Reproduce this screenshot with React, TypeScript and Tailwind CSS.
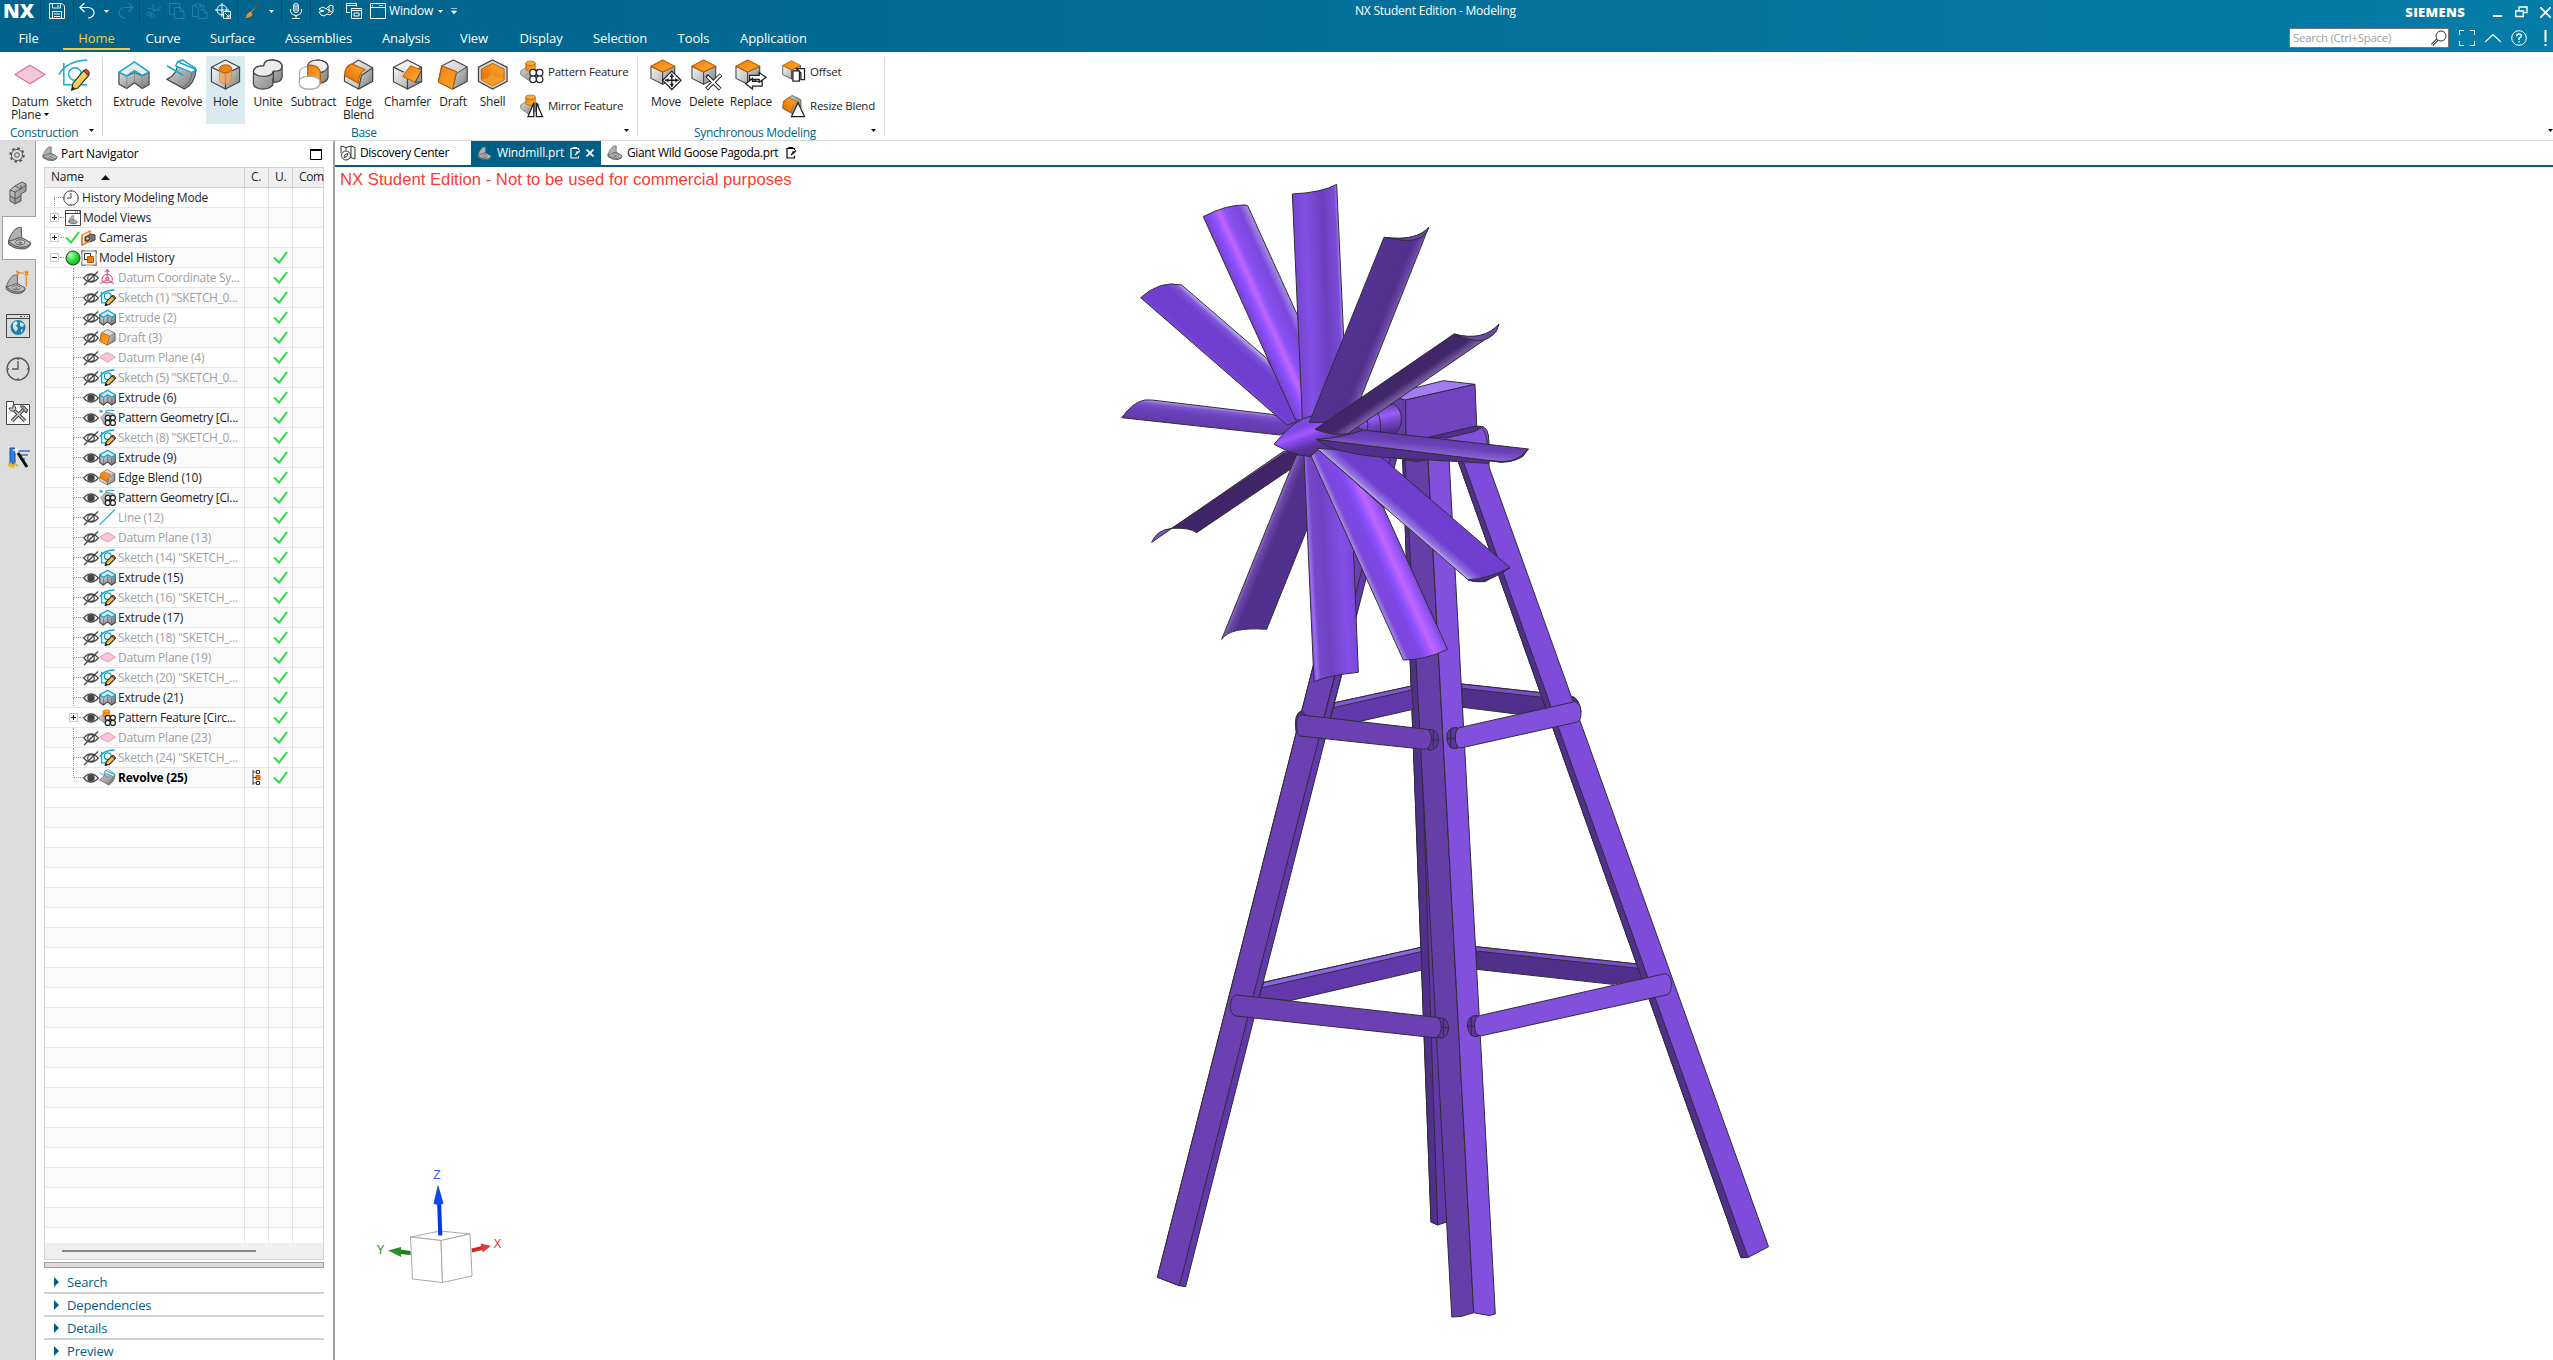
import React from "react";

type Kids = { children?: React.ReactNode };

/* ---------- generic pieces ---------- */

const Svg = ({ s = 16, w, h, box, children, cls = "" }: { s?: number; w?: number; h?: number; box?: string; cls?: string } & Kids) => (
  <svg width={w ?? s} height={h ?? s} viewBox={box ?? `0 0 ${w ?? s} ${h ?? s}`} fill="none" className={`shrink-0 ${cls}`}>
    {children}
  </svg>
);

const Caret = ({ cls = "text-white" }: { cls?: string }) => (
  <Svg w={5} h={3} cls={cls}><path d="M0 0h5L2.5 3z" fill="currentColor" /></Svg>
);

const Defs = () => (
  <svg width="0" height="0" className="absolute">
    <defs>
      <linearGradient id="gl" x1="0" y1="0" x2="1" y2="1"><stop offset="0" stopColor="#f4f4f4" /><stop offset="1" stopColor="#b4b4b4" /></linearGradient>
      <linearGradient id="gd" x1="0" y1="0" x2="1" y2="1"><stop offset="0" stopColor="#d8d8d8" /><stop offset="1" stopColor="#7c7c7c" /></linearGradient>
      <linearGradient id="or" x1="0" y1="0" x2="1" y2="1"><stop offset="0" stopColor="#ee7d10" /><stop offset="1" stopColor="#ffac2e" /></linearGradient>
      <linearGradient id="orl" x1="1" y1="0" x2="0" y2="1"><stop offset="0" stopColor="#ffab30" /><stop offset="1" stopColor="#e06800" /></linearGradient>
      <radialGradient id="gb" cx=".35" cy=".3" r=".8"><stop offset="0" stopColor="#b8ffb8" /><stop offset=".5" stopColor="#2be03a" /><stop offset="1" stopColor="#0aa51c" /></radialGradient>
    </defs>
  </svg>
);

/* ---------- 32 unit feature drawings ---------- */

const K = "#444";
const DatumPlaneArt = () => <path d="M1 16L16.500 6.500L32 16L16.500 25.500z" fill="#f6c6da" stroke="#dd6d98" strokeWidth="1.200" />;
const PencilArt = () => (
  <g>
    <path d="M14 32L15.500 25L26.500 12L32 16.500L20.500 30z" fill="#f8cf52" stroke="#333" strokeWidth="1.200" />
    <path d="M26.500 12l2-1.500q3.500 1 4 4.500l-1.500 2z" fill="#e0393e" stroke="#333" />
    <path d="M14 32l.9-4 2.800 2.500z" fill="#222" />
  </g>
);
const SketchArt = () => (
  <g>
    <path d="M1 16Q9 2 30 1M6 4V26.500H30" stroke="#17a9cf" strokeWidth="1.500" />
    <circle cx="17.500" cy="15.500" r="6.500" stroke="#17a9cf" strokeWidth="1.500" />
    <PencilArt />
  </g>
);
const ExtrudeArt = () => (
  <g>
    <path d="M1 14v12l8 4.500 8-6 8 6 7-4V14L25 17.500 17 14l-8 3.500z" fill="url(#gd)" stroke={K} strokeWidth="1.200" />
    <path d="M9 18v12.500M25 18v12.500M17 14v10.500" stroke="#888" />
    <path d="M1 13.500L17 3L32 13.500L25 17L17 12L9 17.500z" fill="#ececec" stroke="#17a9cf" strokeWidth="1.600" />
  </g>
);
const RevolveArt = () => (
  <g>
    <path d="M12 3L31 11Q30 25 19 31L1 21Q12 16 12 3z" fill="url(#gd)" stroke={K} strokeWidth="1.200" />
    <path d="M12 3L31 11L27 14L10 7z" fill="#fff" stroke="#17a9cf" strokeWidth="1.400" />
    <path d="M27 14Q26 24 17 29" stroke="#666" />
    <path d="M1 7L18 17M12 3L17 1L31 10" stroke="#17a9cf" strokeWidth="1.600" />
  </g>
);
/* bolder drawings used at row size */
const SketchRowArt = () => (
  <g>
    <path d="M1 15Q10 2 30 2M5 6V27H15" stroke="#12a5cc" strokeWidth="2.600" />
    <circle cx="17" cy="14" r="6.500" stroke="#12a5cc" strokeWidth="2.600" />
    <path d="M12 32L14 25L26 13L32 18L20 30z" fill="#f8c440" stroke="#222" strokeWidth="2" />
    <path d="M25 14l3-2 4 4.500-2 2.500z" fill="#d84a3a" stroke="#222" strokeWidth="1.500" />
    <path d="M12 32l1.500-5 4 3.500z" fill="#111" />
  </g>
);
const ExtrudeRowArt = () => (
  <g>
    <path d="M1.500 12v14l7 5 8-6 8 6 7-5V12z" fill="url(#gd)" stroke={K} strokeWidth="2.200" />
    <path d="M9 18v12M25 18v12M17 14v10" stroke="#666" strokeWidth="1.500" />
    <path d="M1 11.500L17 2.500L32 11.500L25 16L17 11L9 16z" fill="#d8eef4" stroke="#12a5cc" strokeWidth="2.600" />
  </g>
);
const CubeArt = ({ top = "#efefef", left = "url(#gl)", right = "url(#gd)" }) => (
  <g stroke={K} strokeWidth="1.200" strokeLinejoin="round">
    <path d="M16 1L30.500 8.500L16 15.500L1.500 8.500z" fill={top} />
    <path d="M1.500 8.500L16 15.500V31L1.500 23.500z" fill={left} />
    <path d="M30.500 8.500L16 15.500V31L30.500 23.500z" fill={right} />
  </g>
);
const HoleArt = () => (
  <g>
    <CubeArt />
    <path d="M10 10v13q6 5 12 0V10z" fill="#f1a35a" opacity=".75" />
    <path d="M10 10v13q6 5 12 0V10" stroke="#e98a2e" />
    <ellipse cx="16" cy="10" rx="6.500" ry="4" fill="#f08314" stroke="#b75e06" />
  </g>
);
const UniteArt = () => (
  <g stroke={K} strokeWidth="1.300">
    <path d="M12 7Q13 1 21 1Q31 2 31 8V19Q30 24 23 24L21.500 22V27Q18 31 11.500 31Q3 31 1.500 26V13Q2 7 12 7z" fill="url(#gd)" />
    <path d="M12 7Q13 1 21 1Q31 2 31 8Q30 13 22 12.500Q21 18 11 18Q2 17 1.500 13Q2 7 12 7z" fill="#ececec" />
    <path d="M22 13V24" />
  </g>
);
const SubtractArt = () => (
  <g strokeWidth="1.200">
    <path d="M10 8Q11 1 21 1Q31 2 31 8V19Q30 24 23 25V14z" fill="url(#gd)" stroke={K} />
    <path d="M10 7Q22 8 23 14Q29 13 31 8Q30 2 21 1Q11 1 10 7z" fill="#ececec" stroke={K} />
    <path d="M1.500 13V26Q3 31 12 31Q21 31 22.500 26V13Q20 8 12 7.500Q3 8 1.500 13z" fill="#fff" stroke="#aaa" />
    <path d="M10 6.500Q20 5 23 13V26Q20 19 10 17z" fill="url(#or)" stroke="#b75e06" />
    <path d="M1.500 22Q3 18 12 18Q20 18 22.500 22V26Q20 31 12 31Q3 31 1.500 26z" fill="#fff" stroke="#aaa" />
  </g>
);
const EdgeBlendArt = () => (
  <g stroke={K} strokeWidth="1.200" strokeLinejoin="round">
    <path d="M16 1L30.500 9V23L16 31L1.500 23V17L11 4z" fill="url(#gl)" />
    <path d="M19 17L30.500 9V23L16 31z" fill="url(#gd)" />
    <path d="M1.500 17Q2 7 9 5L23 11Q16 14 16 25z" fill="url(#orl)" stroke="#b75e06" />
  </g>
);
const ChamferArt = () => (
  <g>
    <CubeArt />
    <path d="M20 6L30.500 12L27 24L9 17z" fill="#ddd" />
    <path d="M19 7L30.500 11.500L24 24L11 18z" fill="url(#or)" stroke="#b75e06" />
    <path d="M30.500 11.500V23.500L24 24z" fill="#999" stroke={K} />
  </g>
);
const DraftArt = () => (
  <g>
    <path d="M17 1L31 8V23L16 31L1.500 23L5 7z" fill="url(#gl)" stroke={K} strokeWidth="1.200" />
    <path d="M20 15L31 8V23L16 31z" fill="url(#gd)" stroke={K} />
    <path d="M5 7L20 13L16 31L1.500 24z" fill="url(#or)" stroke="#b75e06" strokeWidth="1.200" />
  </g>
);
const ShellArt = () => (
  <g>
    <path d="M16 1L31 8.500V23L16 31L1.500 23V8.500z" fill="#d4d4d4" stroke={K} strokeWidth="1.300" />
    <path d="M16 4.500L28 10.500V21.500L16 28L4.500 21.500V10.500z" fill="url(#orl)" stroke="#b75e06" />
    <path d="M16 4.500Q19 18 4.500 21.500L16 28L28 21.500L16 17" fill="#f9a52d" opacity=".7" />
  </g>
);
const BossArt = () => (
  <g>
    <path d="M1 15L9 10L26 14V22L12 28L1 20z" fill="url(#gd)" stroke="#666" />
    <path d="M8 4V14q6 4 13 0V4z" fill="url(#or)" stroke="#b75e06" />
    <ellipse cx="14.500" cy="4.500" rx="6.500" ry="3" fill="#fba83a" stroke="#b75e06" />
  </g>
);
const RingsArt = () => (
  <g fill="#fff" stroke="#222" strokeWidth="1.700">
    <circle cx="18" cy="17.500" r="4.500" /><circle cx="27" cy="17.500" r="4.500" /><circle cx="18" cy="26.500" r="4.500" /><circle cx="27" cy="26.500" r="4.500" />
  </g>
);
const PatternArt = () => <g><BossArt /><RingsArt /></g>;
const MirrorArt = () => (
  <g>
    <BossArt />
    <path d="M19 12V31H11zM22.500 12V31H31z" fill="#fff" stroke="#222" strokeWidth="1.800" />
  </g>
);
const RowRings = () => (
  <g fill="#fff" stroke="#222" strokeWidth="2.400">
    <circle cx="17" cy="17" r="4.800" /><circle cx="27" cy="17" r="4.800" /><circle cx="17" cy="27" r="4.800" /><circle cx="27" cy="27" r="4.800" />
  </g>
);
const PatternRowArt = () => <g><BossArt /><RowRings /></g>;
const PatternGeomArt = () => (
  <g>
    <path d="M4 16L14 6L30 10V24L10 30z" fill="url(#gd)" stroke="#777" strokeWidth="1.500" />
    <path d="M4 1v7M0 4.500h8M12 5q8-4 18-2" stroke="#12a5cc" strokeWidth="2" />
    <RowRings />
  </g>
);
const SyncCube = ({ children }: Kids) => (
  <g>
    <g stroke={K} strokeWidth="1.100" strokeLinejoin="round">
      <path d="M1 7.500L13 13.500V26L1 20z" fill="url(#gl)" />
      <path d="M25.500 7.500L13 13.500V26L25.500 20z" fill="url(#gd)" />
      <path d="M13 1L25.500 7.500L13 13.500L1 7.500z" fill="url(#or)" stroke="#b75e06" />
    </g>
    {children}
  </g>
);
const MoveArt = () => (
  <SyncCube>
    <path d="M22.500 12.500L32 22L22.500 31.500L13 22z" fill="#fff" stroke="#222" strokeWidth="1.300" />
    <path d="M22.500 15v14M15.500 22h14" stroke="#222" strokeWidth="1.500" />
    <path d="M20 18.500l2.500-3 2.500 3zM20 25.500l2.500 3 2.500-3zM19 19.500l-3 2.500 3 2.500zM26 19.500l3 2.500-3 2.500z" fill="#222" />
  </SyncCube>
);
const DeleteArt = () => (
  <SyncCube>
    <path d="M16 17L30 31M31 16L16 31" stroke="#222" strokeWidth="4" />
    <path d="M17 18L29.500 30.500M30.500 16.500L16.500 30.500" stroke="#fff" strokeWidth="2" />
  </SyncCube>
);
const ReplaceArt = () => (
  <SyncCube>
    <path d="M15 17h10v-3l7 5-7 5v-3H15zM28 23H18v-3l-7 5.500 7 5.500v-3H28z" fill="#fff" stroke="#222" strokeWidth="1.300" />
  </SyncCube>
);
const OffsetArt = () => (
  <SyncCube>
    <path d="M15 15h9v14h-9zM20 12h11v15h-5V18z" fill="#fff" stroke="#222" strokeWidth="1.700" />
  </SyncCube>
);
const ResizeArt = () => (
  <g>
    <path d="M14 2L26 8V20L14 27L1 20L2 10z" fill="url(#gd)" stroke={K} />
    <path d="M1 19Q2 7 9 5L22 11Q14 14 13 26z" fill="url(#orl)" stroke="#b75e06" />
    <path d="M22 12L31 31H13z" fill="#fff" stroke="#222" strokeWidth="1.700" />
  </g>
);
const CsysArt = () => (
  <g stroke="#d9467e" strokeWidth="2">
    <path d="M16 3V20L3 29M16 20L29 29" /><path d="M12 6l4-5 4 5M16 10a10 10 0 0 1 9 14M16 10a10 10 0 0 0-9 14M7 24q9 6 18 0" /><circle cx="16" cy="19" r="3" fill="#f6c6da" />
  </g>
);
const LineArt = () => <path d="M1 31L31 1" stroke="#17a9cf" strokeWidth="2.200" />;

const BracketArt = () => (
  <g stroke="#555" strokeWidth="1.300" strokeLinejoin="round">
    <path d="M2 19Q5 10 11 4Q15 1 19 2V16Q12 18 8 24L2 22z" fill="#b0b0b0" />
    <path d="M8 20Q14 14 20 16L31 22Q32 27 24 30Q12 32 2 24V20z" fill="#8c8c8c" />
    <path d="M2 20Q6 19 10 18Q16 14 21 16L31 22Q30 27 20 28Q10 28 2 20z" fill="#bdbdbd" />
    <ellipse cx="17.500" cy="21.500" rx="6" ry="3.200" fill="#d6d6d6" /><ellipse cx="17.500" cy="22" rx="3" ry="1.500" fill="#777" stroke="none" />
  </g>
);

const Art = ({ a, s }: { a: React.ReactNode; s: number }) => <Svg s={s} box="0 0 33 33">{a}</Svg>;

/* ---------- header ---------- */

const Sep = () => <div className="h-[22px] w-px shrink-0 bg-[#004f72]" />;
const Slot = ({ w, children }: { w: string } & Kids) => <div className={`flex shrink-0 items-center justify-center ${w}`}>{children}</div>;

const QuickBar = () => (
  <div className="flex h-[22px] w-[1355px] shrink-0 items-center">
    <span className="w-[40px] shrink-0 pl-[3px] text-[20px] leading-[22px] font-extrabold whitespace-nowrap text-white">NX</span>
    <Sep />
    <Slot w="w-[32px]">
      <Svg><path d="M.5.500h12.500l2.500 2.500V15.500H.5zM3.500.500v4.500h8V.500M3.500 15.500v-7h9v7M5 11h6M5 13.500h6M9 2v2" stroke="#fff" /></Svg>
    </Slot>
    <Sep />
    <Slot w="w-[26px]"><Svg><path d="M5.500 0L.8 4.500 5.500 9M1 4.500h8a6 5.200 0 0 1 0 10.500" stroke="#fff" strokeWidth="1.200" /></Svg></Slot>
    <Slot w="w-[12px]"><Caret /></Slot>
    <Slot w="w-[27px]"><Svg><path d="M10.500 0l4.700 4.500L10.500 9M15 4.500H7a6 5.200 0 0 0 0 10.500" stroke="#1d81a8" strokeWidth="1.200" /></Svg></Slot>
    <Sep />
    <Slot w="w-[27px]"><Svg><path d="M7 1l1 8M1 5l14 3M7 9l-3 1.500M8 8l7-4" stroke="#1d81a8" /><circle cx="3" cy="11" r="2" stroke="#1d81a8" /><circle cx="7" cy="13" r="2" stroke="#1d81a8" /></Svg></Slot>
    <Slot w="w-[19px]"><Svg><path d="M5 11.500H.5V.500h10v4M5.500 4.500h6l3.500 3.500v7.500H5.500zM11 5v3.500h4" stroke="#1d81a8" /></Svg></Slot>
    <Slot w="w-[27px]"><Svg><path d="M5.500 13.500H.5v-11h3M9 2.500h3v3M3.500 1h5.500v3H3.500zM6.500 6.500h5.500l3 3v6H6.500zM12 7v3h3" stroke="#1d81a8" /></Svg></Slot>
    <Slot w="w-[19px]"><Svg><path d="M7 0v4M7 9v5M0 7h4M9.500 7h4.500M7 4v5M4 7h5" stroke="#fff" /><circle cx="7" cy="7" r="5" stroke="#fff" /><path d="M8.500 8.500h7v7h-7z" fill="#00648c" stroke="#fff" /><path d="M10 10l4 4M14 11.500V14h-2.500" stroke="#fff" /></Svg></Slot>
    <Slot w="w-[5px]" />
    <Sep />
    <Slot w="w-[27px]"><Svg><path d="M15 0.500L6.500 9l1 1z" fill="#e8dcc8" stroke="#6b4a30" /><path d="M0 15q3-1 3-4l3-2.500 2.500 2.500Q8 15 0 15z" fill="#e8912c" /></Svg></Slot>
    <Slot w="w-[12px]"><Caret /></Slot>
    <Slot w="w-[4px]" />
    <Sep />
    <Slot w="w-[28px]"><Svg><rect x="5.500" y=".5" width="5" height="9" rx="2.500" stroke="#fff" /><path d="M6 3h4M6 5h4M6 7h4M2.500 6v2.500q1 4 5.500 4t5.500-4V6M8 12.500v3M4 15.500h8" stroke="#fff" /></Svg></Slot>
    <Sep />
    <Slot w="w-[30px]"><Svg><path d="M1 6l4-2 3 2 4-4 3 1v6l-3 3-3-1-3 2-3-1-2-3 5-1-4-1z" stroke="#fff" /><path d="M8 6l3 1v3M11 3v4l3 2" stroke="#fff" /></Svg></Slot>
    <Sep />
    <Slot w="w-[24px]"><Svg><path d="M4 9.500H.5V.500h10v3M.5 2.500h10M5.500 5.500h10v10h-10zM5.500 7.500h10M8 10h5v3H8z" stroke="#fff" /></Svg></Slot>
    <Slot w="w-[23px]"><Svg><path d="M.5.500h15v15H.5zM.5 4.500h15M2 2.500h1M9 2.500h4" stroke="#fff" /></Svg></Slot>
    <span className="w-[45px] text-[12px] tracking-[-0.2px] text-white">Window</span>
    <Slot w="w-[13px]"><Caret /></Slot>
    <Slot w="w-[13px]"><Svg w={6} h={6}><path d="M0 .5h6M.5 3h5L3 6z" fill="#fff" stroke="#fff" strokeWidth=".6" /></Svg></Slot>
  </div>
);

const menu: [string, string][] = [
  ["File", "w-[57px] mr-[6px]"], ["Home", "w-[67px]"], ["Curve", "w-[66px]"], ["Surface", "w-[73px]"], ["Assemblies", "w-[99px]"],
  ["Analysis", "w-[76px]"], ["View", "w-[60px]"], ["Display", "w-[74px]"], ["Selection", "w-[84px]"], ["Tools", "w-[63px]"], ["Application", "w-[97px]"],
];

const Header = () => (
  <div className="h-[52px] bg-linear-to-r from-[#00628a] to-[#067ca8]">
    <div className="flex h-[24px] items-start">
      <QuickBar />
      <span className="text-[12px] leading-[22px] tracking-[-0.22px] whitespace-nowrap text-white">NX Student Edition - Modeling</span>
      <div className="ml-auto flex h-[24px] items-center">
        <span className="mr-[28px] pt-[1px] text-[13px] leading-none font-extrabold tracking-[0.35px] text-white">SIEMENS</span>
        <Svg w={9} h={12} cls="mr-[13px]"><path d="M0 10h9" stroke="#fff" strokeWidth="2" /></Svg>
        <Svg w={13} h={12} cls="mr-[12px]"><path d="M.7 5h7.600v5.500H.7zM4 5V1h8v5.500H8.500" stroke="#fff" strokeWidth="1.400" /></Svg>
        <Svg w={11} h={11} cls="mr-[2px]"><path d="M0 0L11 11M11 0L0 11" stroke="#fff" strokeWidth="1.800" /></Svg>
      </div>
    </div>
    <div className="flex h-[28px]">
      {menu.map(([t, c]) => (
        <div key={t} className={`flex h-[26px] justify-center border-b-2 text-[13px] leading-[28px] tracking-[-0.1px] ${c} ${t === "Home" ? "border-[#fcc640] text-[#fcc640]" : "border-transparent text-white"}`}>{t}</div>
      ))}
      <div className="mt-[4px] ml-auto flex h-[20px] items-center">
        <div className="flex h-[20px] w-[160px] items-center justify-between border border-[#777] bg-white pr-[1px] pl-[3px]">
          <span className="text-[11.500px] tracking-[-0.28px] text-[#a0a0a0]">Search (Ctrl+Space)</span>
          <Svg><circle cx="10" cy="6" r="5" stroke="#333" /><path d="M6.500 9.500L1 15" stroke="#333" strokeWidth="3" /><path d="M6.500 9.500L1 15" stroke="#fff" strokeWidth="1" /></Svg>
        </div>
        <Svg cls="ml-[10px]"><path d="M.5 5V.500H5M11 .5h4.500V5M15.500 11v4.500H11M5 15.500H.5V11" stroke="#fff" /></Svg>
        <Svg cls="ml-[10px]"><path d="M0 12L8 4.500L16 12" stroke="#fff" strokeWidth="1.200" /></Svg>
        <Svg cls="ml-[10px]"><circle cx="8" cy="8" r="7.300" stroke="#fff" /><path d="M5.700 6.300q0-2.300 2.300-2.300t2.300 2q0 1.300-2.300 2.200V10M8 11v1.500" stroke="#fff" strokeWidth="1.300" /></Svg>
        <Svg w={3} cls="mr-[6px] ml-[17px]" h={16}><path d="M1.500 0v12M1.500 14v2" stroke="#fff" strokeWidth="2" /></Svg>
      </div>
    </div>
  </div>
);

/* ---------- ribbon ---------- */

const Tool = ({ art, label, w, on }: { art: React.ReactNode; label: React.ReactNode; w: string; on?: boolean }) => (
  <div className={`mt-[4px] flex h-[68px] shrink-0 flex-col items-center pt-[3px] ${w} ${on ? "bg-[#daebf0]" : ""}`}>
    <Art a={art} s={32} />
    <div className="mt-[4px] text-center text-[12px] leading-[13px] tracking-[-0.2px] whitespace-nowrap text-[#1e1e1e]">{label}</div>
  </div>
);
const SmallTool = ({ art, label }: { art: React.ReactNode; label: string }) => (
  <div className="flex h-[34px] items-center gap-[4px]">
    <Art a={art} s={24} />
    <span className="text-[11.500px] tracking-[-0.22px] whitespace-nowrap text-[#1e1e1e]">{label}</span>
  </div>
);
const Group = ({ w, title, titlePad, children }: { w: string; title: string; titlePad: string } & Kids) => (
  <div className={`flex shrink-0 flex-col ${w}`}>
    <div className="flex h-[73px]">{children}</div>
    <div className="flex h-[15px] items-center justify-between pr-[8px]">
      <span className={`text-[12px] leading-[15px] tracking-[-0.3px] text-[#006487] ${titlePad}`}>{title}</span>
      <Svg w={5} h={3} cls="mb-[5px]"><path d="M0 0h5L2.500 3z" fill="#111" /></Svg>
    </div>
  </div>
);
const GroupLine = () => <div className="mt-[5px] h-[79px] w-px shrink-0 bg-[#d8d8d8]" />;

const Ribbon = () => (
  <div className="flex h-[89px] border-b border-[#d8d8d8] bg-white">
    <Group w="w-[102px]" title="Construction" titlePad="pl-[10px]">
      <Tool w="ml-[8px] w-[44px]" art={<DatumPlaneArt />} label={<>Datum<br />Plane<span className="ml-[3px] inline-block align-middle"><Caret cls="mb-[2px] text-black" /></span></>} />
      <Tool w="w-[44px]" art={<SketchArt />} label="Sketch" />
    </Group>
    <GroupLine />
    <Group w="w-[534px]" title="Base" titlePad="pl-[248px]">
      <Tool w="ml-[7px] w-[48px]" art={<ExtrudeArt />} label="Extrude" />
      <Tool w="w-[47px]" art={<RevolveArt />} label="Revolve" />
      <Tool w="ml-[1px] w-[39px]" art={<HoleArt />} label="Hole" on />
      <Tool w="w-[46px]" art={<UniteArt />} label="Unite" />
      <Tool w="w-[45px]" art={<SubtractArt />} label="Subtract" />
      <Tool w="w-[45px]" art={<EdgeBlendArt />} label={<>Edge<br />Blend</>} />
      <Tool w="w-[53px]" art={<ChamferArt />} label="Chamfer" />
      <Tool w="w-[38px]" art={<DraftArt />} label="Draft" />
      <Tool w="w-[41px]" art={<ShellArt />} label="Shell" />
      <div className="mt-[3px] ml-[7px]">
        <SmallTool art={<PatternArt />} label="Pattern Feature" />
        <SmallTool art={<MirrorArt />} label="Mirror Feature" />
      </div>
    </Group>
    <GroupLine />
    <Group w="w-[246px]" title="Synchronous Modeling" titlePad="pl-[56px]">
      <Tool w="ml-[5px] w-[46px]" art={<MoveArt />} label="Move" />
      <Tool w="w-[35px]" art={<DeleteArt />} label="Delete" />
      <Tool w="w-[54px]" art={<ReplaceArt />} label="Replace" />
      <div className="mt-[3px] ml-[4px]">
        <SmallTool art={<OffsetArt />} label="Offset" />
        <SmallTool art={<ResizeArt />} label="Resize Blend" />
      </div>
    </Group>
    <GroupLine />
    <Svg w={5} h={3} cls="mt-[77px] ml-auto"><path d="M0 0h5L2.500 3z" fill="#111" /></Svg>
  </div>
);

/* ---------- resource bar ---------- */

const SideCell = ({ h, children }: { h: string } & Kids) => <div className={`flex items-center justify-center ${h}`}>{children}</div>;

const ResourceBar = () => (
  <div className="flex w-[36px] shrink-0 flex-col border-r border-[#a0a0a0] bg-[#dcdcdc]">
    <SideCell h="h-[28px] pr-[1px]">
      <Svg><circle cx="8" cy="8" r="5.600" stroke="#555" /><circle cx="8" cy="8" r="2.300" stroke="#555" /><circle cx="8" cy="8" r="6.800" stroke="#555" strokeWidth="1.800" strokeDasharray="2.670 2.670" /></Svg>
    </SideCell>
    <SideCell h="h-[47px]">
      <Svg w={18} h={24}><g stroke="#555" fill="url(#gd)"><path d="M6 5l7-4 4 2v7l-5 3v7l-6 3-5-3V9z" /><path d="M1 9l5 2 6-3V4M6 11v12M1 15l5 3 6-3M6 5l6 3 5-4" fill="none" /></g></Svg>
    </SideCell>
    <div className="-mr-px ml-[2px] flex h-[44px] items-center justify-center border border-r-0 border-[#a0a0a0] bg-white"><Art a={<BracketArt />} s={25} /></div>
    <SideCell h="h-[44px]">
      <Svg s={25} box="0 0 33 33"><g transform="translate(0,5) scale(.86)"><BracketArt /></g><path d="M15 1l4 3-3 3M15 4h10M28 1v6M26 2l5 5M31 2l-5 5M28 8v14" stroke="#ee7d10" strokeWidth="1.500" /></Svg>
    </SideCell>
    <SideCell h="h-[43px]">
      <Svg s={24}><path d="M.5.500h23v23H.5zM.5 4.500h23" stroke="#444" /><path d="M14 2.500h2M18 2.500h1M21 2.500h1" stroke="#444" /><circle cx="12" cy="13.500" r="7.500" fill="#1f7fa6" /><path d="M7 9l3-2 2 2-2 3 2 2-2 4-3-4zM14 8l4 2-1 3-3-1zM15 15l2 1-2 3z" fill="#cfe6ee" /></Svg>
    </SideCell>
    <SideCell h="h-[43px]"><Svg s={24}><circle cx="12" cy="12" r="11" stroke="#555" strokeWidth="1.300" /><path d="M12 4v8H6M12 1v2M12 21v2M1 12h2M21 12h2" stroke="#555" strokeWidth="1.300" /></Svg></SideCell>
    <SideCell h="h-[46px]">
      <Svg s={24}>
        <path d="M.5 3.500V.500h7v3h16v20H.5z" fill="#fff" stroke="#444" />
        <path d="M7 8L19 20M18 8L6 20" stroke="#444" strokeWidth="3.600" />
        <path d="M7 8L19 20M18 8L6 20" stroke="#ccc" strokeWidth="1.400" />
        <path d="M3 7q1 4 5 3l2-2q0-3-3-4v3H5z" fill="#ccc" stroke="#444" />
        <path d="M14 5l4 0 4 4-2 3z" fill="#999" stroke="#444" />
      </Svg>
    </SideCell>
    <SideCell h="h-[42px]">
      <Svg s={24}><path d="M4 3h5v16H4z" fill="#2f7de0" stroke="#1c4fa8" /><path d="M2 19l2 2 1-2 2 3 2-3 3 2" stroke="#e8b414" strokeWidth="2" /><path d="M12 6h12M13 10h9M14 14h5" stroke="#3f72c8" strokeWidth="1.500" /><path d="M12 8l9 14" stroke="#111" strokeWidth="3" /><path d="M10 1l1 3 3 1-3 1-1 3-1-3-3-1 3-1z" fill="#fff" /></Svg>
    </SideCell>
  </div>
);

/* ---------- part navigator ---------- */

const Eye = () => (
  <Svg w={16} h={16}><path d="M.7 8Q8-.2 15.300 8Q8 16.200.7 8z" stroke="#444" strokeWidth="1.200" fill="#fff" /><circle cx="8" cy="8" r="3.700" fill="#444" /></Svg>
);
const EyeOff = () => (
  <Svg w={16} h={16}><path d="M.7 8Q8-.2 15.300 8Q8 16.200.7 8z" stroke="#444" strokeWidth="1.200" /><circle cx="8" cy="8" r="3.300" stroke="#444" strokeWidth="1.200" /><path d="M1 15L15 1.500" stroke="#444" strokeWidth="1.200" /></Svg>
);
const Check = () => <Svg w={15} h={13}><path d="M1 6.500L6 11.500L14 1" stroke="#22e03a" strokeWidth="2" /></Svg>;

const Expander = ({ sign }: { sign: "+" | "-" }) => (
  <Svg w={9} h={9}><path d="M.5.500h8v8h-8z" fill="#fff" stroke="#c8c8c8" /><path d={sign === "+" ? "M2 4.500h5M4.500 2v5" : "M2 4.500h5"} stroke="#222" /></Svg>
);

type Item = { art: React.ReactNode; label: string; on?: boolean; bold?: boolean; plus?: boolean };
const sk = (n: number, t: string): Item => ({ art: <SketchRowArt />, label: `Sketch (${n}) "SKETCH_${t}...` });
const ex = (n: number, on = true): Item => ({ art: <ExtrudeRowArt />, label: `Extrude (${n})`, on });
const dp = (n: number): Item => ({ art: <DatumPlaneArt />, label: `Datum Plane (${n})` });
const items: Item[] = [
  { art: <CsysArt />, label: "Datum Coordinate Sy..." }, sk(1, "0"), ex(2, false), { art: <DraftArt />, label: "Draft (3)" }, dp(4), sk(5, "0"), ex(6),
  { art: <PatternGeomArt />, label: "Pattern Geometry [Ci...", on: true }, sk(8, "0"), ex(9), { art: <EdgeBlendArt />, label: "Edge Blend (10)", on: true },
  { art: <PatternGeomArt />, label: "Pattern Geometry [Ci...", on: true }, { art: <LineArt />, label: "Line (12)" }, dp(13), sk(14, ""), ex(15), sk(16, ""), ex(17), sk(18, ""),
  dp(19), sk(20, ""), ex(21), { art: <PatternRowArt />, label: "Pattern Feature [Circ...", on: true, plus: true }, dp(23), sk(24, ""),
  { art: <RevolveArt />, label: "Revolve (25)", on: true, bold: true },
];

const Row = ({ i, name, c, u }: { i: number; name?: React.ReactNode; c?: React.ReactNode; u?: boolean }) => (
  <div className={`grid h-[20px] shrink-0 grid-cols-[200px_24px_24px_1fr] border-b border-[#e6e6e6] ${i % 2 ? "bg-[#fafafa]" : "bg-white"}`}>
    <div className="flex items-center overflow-hidden border-r border-[#e6e6e6]">{name}</div>
    <div className="flex items-center justify-center border-r border-[#e6e6e6]">{c}</div>
    <div className="flex items-center justify-center border-r border-[#e6e6e6]">{u && <Check />}</div>
    <div />
  </div>
);
const Label = ({ children, cls = "text-[#1e1e1e]", tight }: { cls?: string; tight?: boolean } & Kids) => (
  <span className={`text-[12px] leading-[18px] whitespace-nowrap ${tight ? "tracking-[-0.33px]" : "tracking-[-0.2px]"} ${cls}`}>{children}</span>
);
const Branch = ({ last, first, w = "w-[9px]" }: { last?: boolean; first?: boolean; w?: string }) => (
  <div className={`flex h-[20px] shrink-0 flex-col ${w}`}>
    <div className={`h-[10px] border-b border-dotted border-[#999] ${first ? "" : "border-l"}`} />
    <div className={`h-[10px] border-dotted border-[#999] ${last ? "" : "border-l"}`} />
  </div>
);
const Stub = () => <div className="mr-[1px] ml-px w-[4px] shrink-0 border-b border-dotted border-[#999]" />;

const Tree = () => (
  <div className="ml-[8px] flex h-[1093px] w-[280px] shrink-0 flex-col border border-[#d0d0d0]">
    <div className="grid h-[20px] shrink-0 grid-cols-[200px_24px_24px_1fr] border-b border-[#d0d0d0] bg-[#f0f0f0] *:h-[19px]">
      <div className="flex items-start gap-[17px] border-r border-[#d0d0d0] pl-[6px]"><Label>Name</Label><Svg w={9} h={5} cls="mt-[7px]"><path d="M0 5L4.500 0L9 5z" fill="#111" /></Svg></div>
      <div className="flex items-start border-r border-[#d0d0d0] pl-[6px]"><Label>C.</Label></div>
      <div className="flex items-start border-r border-[#d0d0d0] pl-[6px]"><Label>U.</Label></div>
      <div className="flex items-start pl-[6px]"><Label tight>Com</Label></div>
    </div>
    <div className="flex h-[1055px] shrink-0 flex-col overflow-hidden">
      <Row i={0} name={<><div className="ml-[9px]"><Branch first /></div><Svg><circle cx="8" cy="8" r="7.300" stroke="#444" fill="#fff" /><path d="M8 3v5H4M8 1v1M8 14v1M1 8h1M14 8h1" stroke="#444" /></Svg><Label cls="ml-[3px] text-[#1e1e1e]">History Modeling Mode</Label></>} />
      <Row i={1} name={<><div className="ml-[5px]"><Expander sign="+" /></div><Stub /><Svg><path d="M.5.500h15v15H.5zM.5 3.500h15" stroke="#444" fill="#fff" /><path d="M10 2h1M12 2h1M14 2h1" stroke="#444" /><g transform="translate(3,5) scale(.3)"><BracketArt /></g></Svg><Label cls="ml-[2px] text-[#1e1e1e]">Model Views</Label></>} />
      <Row i={2} name={<><div className="ml-[5px]"><Expander sign="+" /></div><Stub /><Check /><Svg cls="ml-[1px]"><path d="M1 5L9 1V11L1 15z" stroke="#e87a18" strokeWidth="1.300" fill="#fde7cf" /><path d="M4 7l6-3 4 1v5l-5 2-5-1z" fill="#777" stroke="#444" /><circle cx="6.500" cy="8.500" r="2" fill="#bbb" stroke="#333" /><path d="M1 5v10l8-4" stroke="#e87a18" strokeWidth="1.300" /></Svg><Label cls="ml-[2px] text-[#1e1e1e]">Cameras</Label></>} />
      <Row i={3} u name={<><div className="ml-[5px]"><Expander sign="-" /></div><Stub /><Svg><circle cx="8" cy="8" r="7" fill="url(#gb)" stroke="#333" /></Svg><Svg><path d="M.5 4V.500H4M12 .5h3.500V4M15.500 12v3.500H12M4 15.500H.5V12M1 1h14v14H1z" stroke="#888" /><path d="M3.500 3.500h6v6h-6z" fill="#fff" stroke="#333" /><path d="M6.500 6.500h6v6h-6z" fill="#ee7d10" stroke="#b75e06" /></Svg><Label cls="ml-[2px] text-[#1e1e1e]">Model History</Label></>} />
      {items.map((t, n) => (
        <Row
          key={n}
          i={n + 4}
          u
          c={t.bold ? <Svg w={9} h={15}><path d="M1 0v15M1 2h4M1 7.500h4M1 13h4" stroke="#444" /><path d="M4.500.500h3v3h-3zM4.500 11.500h3v3h-3z" fill="#fff" stroke="#333" /><path d="M4 5.500h4v4H4z" fill="#ee7d10" stroke="#b75e06" /></Svg> : undefined}
          name={
            <>
              {t.plus ? <div className="mr-px ml-[24px]"><Expander sign="+" /></div> : null}
              {t.plus ? <div className="w-[4px] shrink-0 border-b border-dotted border-[#999]" /> : <div className="ml-[28px]"><Branch last={n === items.length - 1} w="w-[10px]" /></div>}
              {t.on ? <Eye /> : <EyeOff />}
              <Art a={t.art} s={17} />
              <Label tight={t.label.endsWith("...")} cls={`ml-[2px] ${t.bold ? "font-bold text-black" : t.on ? "text-[#1e1e1e]" : "text-[#a0a0a0]"}`}>{t.label}</Label>
            </>
          }
        />
      ))}
      {Array.from({ length: 23 }, (_, n) => <Row key={n} i={n + 30} />)}
    </div>
    <div className="flex flex-1 items-center bg-[#f0f0f0]"><div className="ml-[17px] h-[2px] w-[194px] bg-[#868686]" /></div>
  </div>
);

const PartNavigator = () => (
  <div className="flex w-[299px] shrink-0 flex-col border-r-2 border-[#a0a0a0] bg-white">
    <div className="flex h-[26px] shrink-0 items-center pl-[6px]">
      <Art a={<BracketArt />} s={16} />
      <span className="ml-[3px] pb-px text-[12px] tracking-[-0.22px] text-black">Part Navigator</span>
      <Svg w={12} h={11} cls="mr-[11px] ml-auto"><path d="M.5.500h11v10H.5z" stroke="#000" /><path d="M0 1h12" stroke="#000" strokeWidth="2" /></Svg>
    </div>
    <Tree />
    <div className="mt-[2px] ml-[8px] h-[6px] w-[280px] shrink-0 border border-[#a0a0a0] bg-[#dcdcdc]" />
    <div className="mt-[3px] ml-[8px] flex w-[280px] shrink-0 flex-col">
      {["Search", "Dependencies", "Details", "Preview"].map((t) => (
        <div key={t} className="flex h-[23px] items-center border-b-2 border-[#d0d0d0] pl-[10px]">
          <Svg w={5} h={10}><path d="M0 0L5 5L0 10z" fill="#005f87" /></Svg>
          <span className="ml-[8px] text-[13px] leading-[20px] tracking-[-0.15px] text-[#005f87]">{t}</span>
        </div>
      ))}
    </div>
  </div>
);

/* ---------- windmill model ---------- */

type Stop = [number, string];
const Grad = ({ id, p, stops }: { id: string; p: number[]; stops: Stop[] }) => (
  <linearGradient id={id} gradientUnits="userSpaceOnUse" x1={p[0]} y1={p[1]} x2={p[2]} y2={p[3]}>
    {stops.map(([o, c], i) => <stop key={i} offset={o} stopColor={c} />)}
  </linearGradient>
);

const Tower = () => (
  <g stroke="#2e2e36" strokeWidth="1" strokeLinejoin="round">
    {/* rear leg */}
    <path d="M1402.700 460L1431 1222L1437.700 1225L1446.800 1222V460z" fill="#6238aa" />
    <path d="M1402.700 460L1431 1222L1437.700 1225L1412 460z" fill="#51308c" />
    {/* left leg */}
    <path d="M1157.400 1277.300L1367 455H1397.500L1185.600 1286.700L1179.400 1285.700z" fill="#6238aa" />
    <path d="M1157.400 1277.300L1367 455H1391L1179.400 1285.700z" fill="#6c40b2" />
    {/* rear rungs, in third-pixel units */}
    <g transform="translate(1220,660) scale(.33333)" strokeWidth="3">
      <path d="M345 128L575 78L580 148L415 185L330 177z" fill="#6238aa" />
      <path d="M345 128L575 78V90L341 143z" fill="#8358d8" />
      <path d="M725 72L965 98L985 145L890 162L728 142z" fill="#51308c" />
      <path d="M725 72L963 98L968 112L725 85z" fill="#7a4ec8" />
      <path d="M130 967L603 862L606 930L210 1022L118 1012z" fill="#6238aa" />
      <path d="M132 967L603 862V875L126 983z" fill="#8c64e4" />
      <path d="M767 860L1252 912L1275 955L1178 973L770 928z" fill="#51308c" />
      <path d="M767 860L1252 912L1257 925L767 873z" fill="#7a4ec8" />
      <path d="M228 215Q220 160 245 152L260 170z" fill="#51308c" />
      <path d="M1055 108Q1078 115 1083 155L1065 130z" fill="#51308c" />
    </g>
    {/* right leg */}
    <path d="M1457 458L1741 1257.700L1748 1257.500L1768.500 1246.700L1489 467V450H1457z" fill="#7f4bdb" />
    <path d="M1457 458L1741 1257.700L1748 1257.500L1462 458z" fill="#51308c" />
    {/* front leg */}
    <path d="M1405 460H1428L1473.700 1312.700L1461 1316.500L1451.800 1317z" fill="#653ea8" />
    <path d="M1428 458H1449L1495.300 1314L1489 1315.500L1473.700 1312.700z" fill="#8350de" />
    {/* front rungs */}
    <g transform="translate(1220,660) scale(.33333)" strokeWidth="3">
      <path d="M345 45L312 175M365 45L330 177M126 980L118 1012" fill="none" />
      <path d="M625 208Q652 205 656 238Q654 275 625 270z" fill="#5a379a" />
      <path d="M245 165L622 208Q635 215 634 240Q630 270 612 268L240 228Q228 220 230 190Q232 165 245 165z" fill="#6c40b2" />
      <path d="M635 240h20M640 215v48" />
      <path d="M712 203Q680 200 680 235Q685 272 712 265z" fill="#5a379a" />
      <path d="M718 203L1065 125Q1083 130 1083 160Q1083 182 1072 186L722 264Q706 262 706 235Q706 208 718 203z" fill="#8350de" />
      <path d="M680 235h26M692 208v56" />
      <path d="M655 1073Q684 1072 686 1102Q684 1140 655 1134z" fill="#5a379a" />
      <path d="M50 1005L650 1072Q664 1076 664 1105Q660 1134 642 1133L48 1068Q30 1062 31 1035Q34 1006 50 1005z" fill="#6c40b2" />
      <path d="M664 1103h22M670 1078v50" />
      <path d="M772 1066Q742 1066 742 1098Q748 1136 774 1129z" fill="#5a379a" />
      <path d="M778 1067L1335 941Q1354 945 1354 972Q1354 1000 1342 1004L782 1128Q764 1126 764 1098Q764 1070 778 1067z" fill="#8350de" />
      <path d="M742 1098h22M754 1072v56" />
    </g>
  </g>
);

const Rotor = () => (
  <g transform="translate(1100,170) scale(.33333)" stroke="#2e2e36" strokeWidth="3" strokeLinejoin="round">
    <defs>
      <Grad id="b1" p={[65, 743, 72, 681]} stops={[[0, "#6238aa"], [0.6, "#6c42be"], [0.82, "#7d55cc"], [1, "#b79cf0"]]} />
      <Grad id="b2" p={[122, 383, 194, 301]} stops={[[0, "#7a46dc"], [0.15, "#703fd0"], [0.72, "#703fd0"], [0.88, "#7f55d8"], [1, "#b9a6ee"]]} />
      <Grad id="b3" p={[310, 140, 433, 84]} stops={[[0, "#7a42d0"], [0.2, "#8a50ff"], [0.36, "#c066ff"], [0.5, "#8a50f4"], [0.8, "#7c48dc"], [1, "#a890e4"]]} />
      <Grad id="b4" p={[577, 72, 720, 66]} stops={[[0, "#7645d0"], [0.25, "#844fe6"], [0.62, "#6c3fc0"], [0.88, "#7d4cd8"], [0.93, "#a07af0"], [1, "#7b4ad6"]]} />
      <Grad id="b5" p={[852, 202, 958, 245]} stops={[[0, "#54328f"], [0.75, "#52308d"], [0.92, "#6744a8"], [1, "#7a60ac"]]} />
      <Grad id="b6" p={[1062, 492, 1099, 546]} stops={[[0, "#3f2668"], [0.6, "#41286c"], [1, "#7c62a8"]]} />
      <Grad id="b7" p={[790, 780, 785, 832]} stops={[[0, "#6238aa"], [0.5, "#6c42ba"], [1, "#8a64d4"]]} />
      <Grad id="b8" p={[1105, 1230, 1177, 1147]} stops={[[0, "#c0b0f0"], [0.1, "#9474e0"], [0.3, "#703fd0"], [1, "#703fd0"]]} />
      <Grad id="b9" p={[910, 1470, 1032, 1415]} stops={[[0, "#a890e4"], [0.12, "#7c48dc"], [0.4, "#8048e6"], [0.52, "#8a50ff"], [0.7, "#c066ff"], [0.84, "#a25aff"], [1, "#8048dc"]]} />
      <Grad id="b10" p={[642, 1535, 775, 1527]} stops={[[0, "#7b4ad6"], [0.08, "#9a70f0"], [0.16, "#7848cc"], [0.4, "#6f42c4"], [0.8, "#844fe6"], [1, "#7d49dc"]]} />
      <Grad id="b11" p={[365, 1408, 471, 1451]} stops={[[0, "#8a70bc"], [0.1, "#6a46aa"], [0.28, "#52308d"], [1, "#52308d"]]} />
      <Grad id="hub" p={[590, 745, 630, 862]} stops={[[0, "#7a4cd0"], [0.25, "#7e48e8"], [0.42, "#a458ff"], [0.52, "#8448f0"], [0.75, "#5a339c"], [1, "#4a2c86"]]} />
      <Grad id="shaft" p={[830, 700, 850, 790]} stops={[[0, "#5a339c"], [0.45, "#9a5cf8"], [0.7, "#7244c4"], [1, "#51308c"]]} />
    </defs>
    {/* nacelle and top collars */}
    <path d="M985 800L1125 768L1150 770Q1163 778 1165 795L1168 830L1040 815z" fill="#8350de" />
    <path d="M985 800L1125 768L1145 772L1125 784L1040 804z" fill="#51308c" />
    <path d="M1145 772Q1160 790 1162 822" fill="none" />
    <path d="M840 855L950 875Q975 875 980 860L1025 872Q1045 865 1045 850L900 810z" fill="#51308c" />
    <path d="M840 685L890 680L917 690V815L840 800z" fill="#653ea8" />
    <path d="M860 675L1030 632L1125 643L917 690z" fill="#a37cf0" />
    <path d="M917 690L1125 643L1130 767L918 818z" fill="#7244c2" />
    <path d="M720 745L880 702Q905 715 904 750Q903 785 875 795L720 815z" fill="url(#shaft)" />
    <path d="M798 738Q808 765 800 785M832 726Q846 755 840 790" fill="none" />
    {/* blades behind the hub */}
    <path d="M65 743Q100 695 135 690L155 690L515 733L600 760L540 795z" fill="url(#b1)" />
    <path d="M122 383Q180 330 245 345L500 565L600 750L562 766z" fill="url(#b2)" />
    <path d="M310 140Q380 103 435 105L443 107L592 435L640 750H587z" fill="url(#b3)" />
    <path d="M577 72Q665 68 710 43L731 500L700 750L607 747z" fill="url(#b4)" />
    <path d="M155 1117Q170 1080 215 1075L580 848L552 843z" fill="#7c58b8" />
    <path d="M215 1075Q270 1072 290 1088L575 895L600 845L552 850z" fill="#402669" />
    <path d="M575 890L365 1408Q390 1370 500 1378L620 1080L625 855H590z" fill="url(#b11)" />
    <path d="M612 855L642 1535Q690 1515 775 1507L760 1135L650 850z" fill="url(#b10)" />
    <path d="M522 823Q585 745 635 738Q720 745 790 780L740 842Q690 860 630 860Q580 855 522 823z" fill="url(#hub)" />
    <path d="M852 202Q950 215 986 172L780 690L700 757L628 757z" fill="url(#b5)" />
    <path d="M852 202Q950 215 986 172Q970 222 890 208z" fill="#7248ac" />
    <path d="M1062 492Q1100 505 1160 500L1190 482L1150 512L745 790Q700 800 645 778z" fill="url(#b6)" />
    <path d="M1062 492Q1150 515 1197 462Q1190 500 1145 512Q1110 512 1062 492z" fill="#6a4a9c" />
    {/* blades in front of the hub */}
    <path d="M633 858L910 1470Q970 1472 1043 1438L850 1012L655 838z" fill="url(#b9)" />
    <path d="M650 835L1105 1230Q1130 1238 1155 1235L1230 1193L825 845Q740 842 650 835z" fill="url(#b8)" />
    <path d="M1105 1230Q1150 1248 1230 1193Q1165 1225 1105 1230z" fill="#51308c" />
    <path d="M650 808L1170 872L1165 880L850 862Q700 850 650 808z" fill="#51308c" />
    <path d="M650 808Q720 805 790 780L1285 837L1268 860Q1225 885 1170 872z" fill="url(#b7)" />
    <path d="M1170 872Q1245 890 1285 837Q1260 875 1205 875z" fill="#51308c" />
  </g>
);

const Triad = () => (
  <g>
    <g stroke="#a8a8a8" strokeWidth="1" fill="#fff">
      <path d="M410.500 1237L440 1231L470 1234L441 1240.500z" />
      <path d="M410.500 1237L441 1240.500L442.500 1282.500L412.500 1279z" />
      <path d="M441 1240.500L470 1234L472 1276L442.500 1282.500z" />
    </g>
    <path d="M437 1200h4l1.300 35.500h-4z" fill="#0038e8" />
    <path d="M438 1184.500L443.500 1203.500Q438.500 1206 433.500 1203.500z" fill="#0a48f0" />
    <path d="M400 1249.500L410.500 1251v4L400 1254z" fill="#1f7a20" />
    <path d="M388 1250.500L401 1247v10z" fill="#2d8f2c" />
    <path d="M471.500 1248.500L482 1246v4L472 1252.500z" fill="#c92a2a" />
    <path d="M491 1246L480.500 1243.500L482.500 1252.500z" fill="#e03a3a" />
    <g fontFamily="Liberation Sans, sans-serif" fontSize="12" textAnchor="middle">
      <text x="437" y="1179" fill="#3355ff">Z</text>
      <text x="380.500" y="1254" fill="#2d8f2c">Y</text>
      <text x="497.500" y="1248" fill="#d64040">X</text>
    </g>
  </g>
);

/* ---------- graphics window ---------- */

const EditMark = () => <Svg w={11} h={12}><path d="M8.500 3V1.500H1v9.500h7.500V9M3 1.500V.500h3.500v1M5 8l5-4.500M6 5l3.500 0" stroke="currentColor" strokeWidth="1.200" /></Svg>;

const Workspace = () => (
  <div className="flex min-w-0 flex-1 flex-col bg-white">
    <div className="flex h-[26px] shrink-0 border-b-2 border-[#005f87] text-[12px] tracking-[-0.36px] whitespace-nowrap">
      <div className="flex w-[136px] items-center pl-[5px] text-black">
        <Svg><path d="M6 2.500L1 1v7M6 2.500L11 1l4 1.500V14l-4-1.500L9 13.500M11 1v11.500M6 2.500V5" stroke="#333" /><circle cx="6" cy="10.500" r="4.500" stroke="#333" fill="#fff" /><path d="M8 8.500L5 9.500L4 12.500L7 11.500z" stroke="#333" /></Svg>
        <span className="ml-[4px]">Discovery Center</span>
      </div>
      <div className="flex w-[130px] items-center bg-[#005f87] pl-[6px] text-white">
        <Art a={<BracketArt />} s={15} />
        <span className="ml-[5px] w-[68px] tracking-[-0.12px]">Windmill.prt</span>
        <span className="ml-[5px]"><EditMark /></span>
        <Svg w={8} h={8} cls="ml-[5px]"><path d="M.5.500l7 7M7.500.500l-7 7" stroke="#fff" strokeWidth="1.800" /></Svg>
      </div>
      <div className="flex items-center pl-[6px] text-black">
        <Art a={<BracketArt />} s={16} />
        <span className="ml-[4px] w-[152px]">Giant Wild Goose Pagoda.prt</span>
        <span className="ml-[7px]"><EditMark /></span>
      </div>
    </div>
    <div className="relative h-[1193px] overflow-hidden">
      <div className="pt-[2px] pl-[5px] font-['Liberation_Sans',sans-serif] text-[16.700px] leading-[21px] text-[#fa3c32]">NX Student Edition - Not to be used for commercial purposes</div>
      <svg className="absolute inset-0" width="2218" height="1193" viewBox="335 167 2218 1193" fill="none">
        <Tower />
        <Rotor />
        <Triad />
      </svg>
    </div>
  </div>
);

export default function App() {
  return (
    <div className="flex h-[1360px] w-[2553px] flex-col overflow-hidden bg-white font-['Open_Sans',sans-serif]">
      <Defs />
      <Header />
      <Ribbon />
      <div className="flex h-[1219px] overflow-hidden">
        <ResourceBar />
        <PartNavigator />
        <Workspace />
      </div>
    </div>
  );
}
